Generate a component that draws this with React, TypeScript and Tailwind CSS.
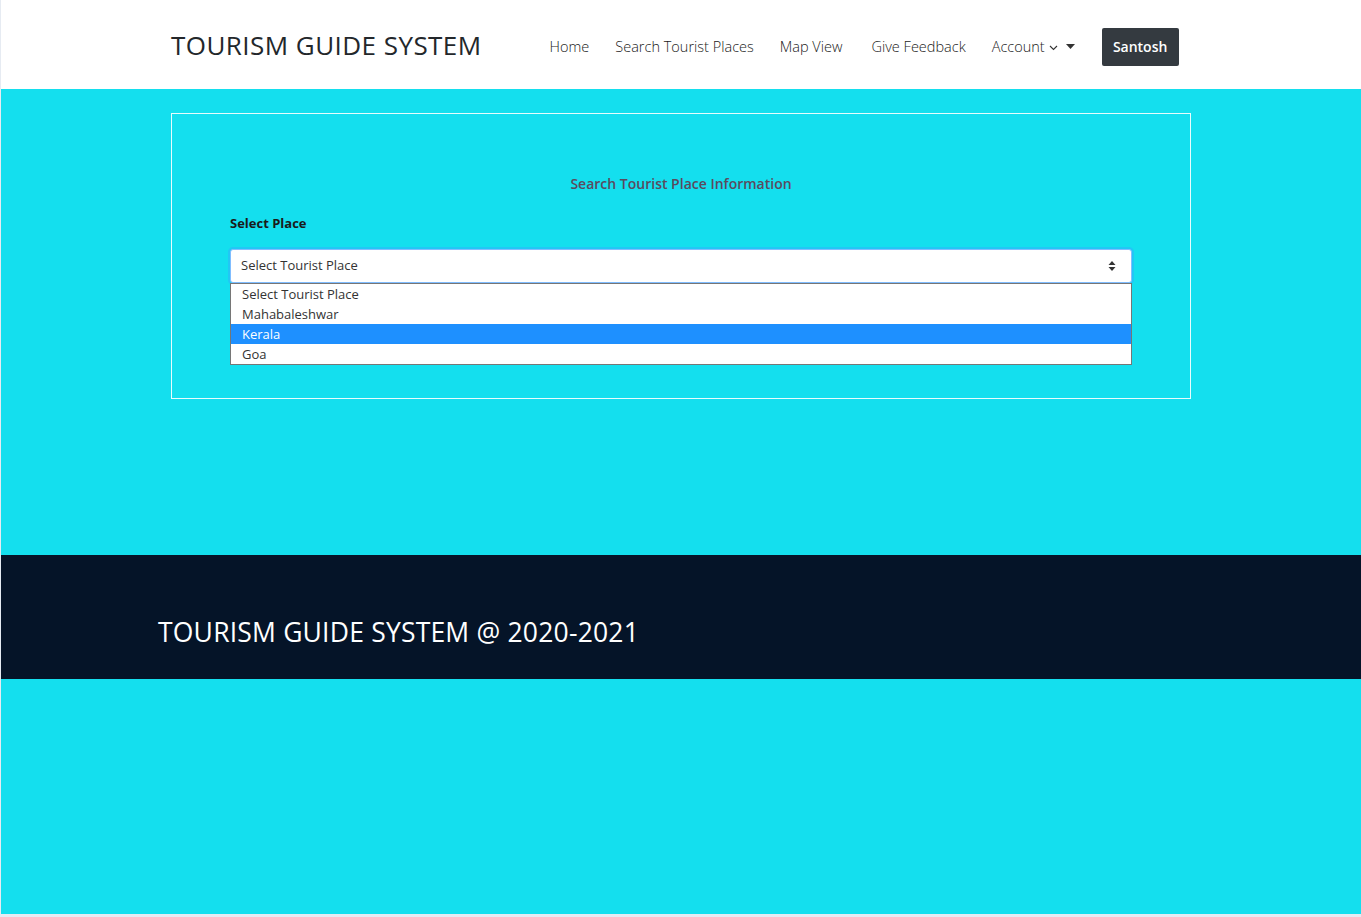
import React from "react";

export default function App() {
  const font = { fontFamily: '"Open Sans", "Noto Sans", sans-serif' };
  return (
    <div className="w-[1361px] h-[917px] bg-[#e6ebf2] flex flex-col" style={font}>
      <div className="flex flex-col ml-[1px] h-[914px] bg-[#14dfee]">
        {/* Header */}
        <header className="h-[89px] bg-white flex items-center shrink-0">
          <div className="w-[1020px] ml-[170px] flex items-center">
            <div className="text-[26px] text-[#23272b] tracking-[0.45px] leading-none">TOURISM GUIDE SYSTEM</div>
            <nav className="ml-[68px] mt-[4px] flex items-center text-[14.5px] text-[#1a1a1a] font-light">
              <span>Home</span>
              <span className="ml-[26px]">Search Tourist Places</span>
              <span className="ml-[26px]">Map View</span>
              <span className="ml-[29px]">Give Feedback</span>
              <span className="ml-[26px] flex items-center">
                Account
                <svg width="9" height="6" viewBox="0 0 9 6" className="ml-[4px] mt-[2px]">
                  <path d="M1 1 L4.5 4.5 L8 1" fill="none" stroke="#333" strokeWidth="1.1" />
                </svg>
                <svg width="9" height="5" viewBox="0 0 9 5" className="ml-[8px]">
                  <path d="M0 0 H9 L4.5 5 Z" fill="#333" />
                </svg>
              </span>
              <span className="ml-[27px] bg-[#343a40] text-white font-semibold text-[14px] w-[77px] h-[38px] flex items-center justify-center rounded-[2px]">
                Santosh
              </span>
            </nav>
          </div>
        </header>

        {/* Main */}
        <main className="h-[466px] shrink-0 pt-[24px]">
          <div className="w-[1020px] h-[286px] ml-[170px] border border-white/90 flex flex-col px-[58px]">
            <div className="mt-[59px] text-center text-[14px] font-semibold text-[#5b4a5e]">
              Search Tourist Place Information
            </div>
            <div className="mt-[20px] text-[13px] font-bold text-[#1a1a1a]">Select Place</div>
            <div className="mt-[15px] relative">
              <div className="h-[34px] bg-white rounded-[3px] border border-[#80bdff] shadow-[0_0_0_2px_#22c7f5] flex items-center px-[10px] text-[13px] text-[#333]">
                Select Tourist Place
                <svg width="8" height="12" viewBox="0 0 8 12" className="ml-auto mr-[5px]">
                  <path d="M0.5 5 L4 1 L7.5 5 Z" fill="#333" />
                  <path d="M0.5 7 L4 11 L7.5 7 Z" fill="#333" />
                </svg>
              </div>
              <div className="absolute left-0 right-0 top-[34px] bg-white border border-[#767676] text-[13px] text-[#333] flex flex-col">
                <div className="h-[20px] px-[11px] leading-[20px]">Select Tourist Place</div>
                <div className="h-[20px] px-[11px] leading-[20px]">Mahabaleshwar</div>
                <div className="h-[20px] px-[11px] leading-[20px] bg-[#1e90ff] text-white">Kerala</div>
                <div className="h-[20px] px-[11px] leading-[20px]">Goa</div>
              </div>
            </div>
          </div>
        </main>

        {/* Footer */}
        <footer className="h-[124px] bg-[#051428] flex items-start shrink-0 pt-[63px]">
          <div className="ml-[157px] text-white text-[26.5px] tracking-[0.2px] leading-[28px]">TOURISM GUIDE SYSTEM @ 2020-2021</div>
        </footer>
      </div>
    </div>
  );
}
